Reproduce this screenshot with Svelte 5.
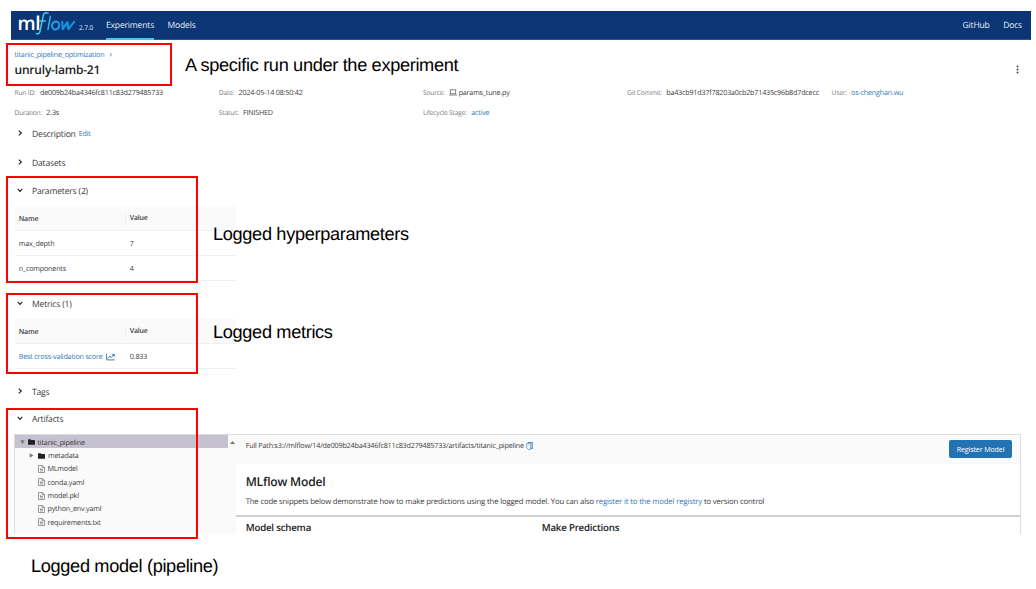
<script>
  const meta = [
    [
      { label: 'Run ID:', value: 'de009b24ba4346fc811c83d279485733' },
      { label: 'Date:', value: '2024-05-14 08:50:42' },
      { label: 'Source:', value: 'params_tune.py', icon: true },
      { label: 'Git Commit:', value: 'ba43cb91d37f78203a0cb2b71435c96b8d7dcecc' },
      { label: 'User:', value: 'os-chenghan.wu', link: true }
    ],
    [
      { label: 'Duration:', value: '2.3s' },
      { label: 'Status:', value: 'FINISHED' },
      { label: 'Lifecycle Stage:', value: 'active', link: true }
    ]
  ];
  const params = [['max_depth', '7'], ['n_components', '4']];
  const metrics = [['Best cross-validation score', '0.833']];
  const files = ['MLmodel', 'conda.yaml', 'model.pkl', 'python_env.yaml', 'requirements.txt'];
</script>

{#snippet section(title, open, cls, edit)}
  <div class="section {cls}">
    <svg class="chev" class:open width="6" height="6" viewBox="0 0 6 6"><path d="M1.8 .7 4.3 3 1.8 5.3" fill="none" stroke="#222" stroke-width="1.15" /></svg>
    <span>{title}</span>
    {#if edit}<a class="edit">Edit</a>{/if}
  </div>
{/snippet}

{#snippet table(rows, linked)}
  <div class="table">
    <div class="tr th"><span>Name</span><span class="val">Value</span></div>
    {#each rows as [name, value]}
      <div class="tr">
        {#if linked}
          <span class="link">{name}
            <svg width="9" height="8" viewBox="0 0 9 8" fill="none" stroke="#2a73b8"><path d="M.6.6v6.3h8.2" stroke-width=".9" /><path d="M1.8 5.4 3.8 3.3 5.2 4.4 8 1.8M6.3 1.5h2v2" stroke-width="1" /></svg>
          </span>
        {:else}
          <span>{name}</span>
        {/if}
        <span class="val">{value}</span>
      </div>
    {/each}
  </div>
{/snippet}

{#snippet folder()}
  <svg class="folder" width="7" height="6" viewBox="0 0 7 6"><path d="M0 .8Q0 .2.6.2H2.6L3.4 1.1H6.4Q7 1.1 7 1.7V5.2Q7 5.8 6.4 5.8H.6Q0 5.8 0 5.2Z" fill="#222" /></svg>
{/snippet}

<div class="page">
  <header>
    <div class="logo">
      <span class="ml">ml</span>
      <svg class="flow" width="41" height="25" viewBox="0 0 41 25" fill="none" stroke-linecap="round" stroke-linejoin="round">
        <path d="M13 2.2C10.6.9 8.8 2.1 8.2 4.7L5 20.2C4.4 22.7 3 23.3 1.4 22.5M4.5 10H10.3" stroke="#43c9ed" stroke-width="1.5" />
        <path d="M15.4 5.2 13 18.4" stroke="#32b5e8" stroke-width="1.5" />
        <ellipse cx="20.6" cy="14.5" rx="3.6" ry="4" transform="rotate(18 20.6 14.5)" stroke="#24a4e4" stroke-width="1.9" />
        <path d="M27.2 10.8 27.7 18.2 32.4 11.2 33.4 18.2 39.2 10.8" stroke="#1396e2" stroke-width="2.1" />
      </svg>
      <span class="ver">2.7.0</span>
    </div>
    <nav><a class="active">Experiments</a><a>Models</a></nav>
    <nav class="right"><a>GitHub</a><a>Docs</a></nav>
  </header>

  <main>
    <div class="crumb"><a>titanic_pipeline_optimization</a><svg width="4" height="5" viewBox="0 0 4 5"><path d="M1 1.2 2.6 2.7 1 4.2" fill="none" stroke="#666" stroke-width=".8" /></svg></div>
    <div class="titlerow">
      <h1>unruly-lamb-21</h1>
      <svg width="3" height="9" viewBox="0 0 3 9" fill="#444"><circle cx="1.5" cy="1.5" r=".95" /><circle cx="1.5" cy="4.5" r=".95" /><circle cx="1.5" cy="7.5" r=".95" /></svg>
    </div>
    {#each meta as row}
      <div class="meta">
        {#each row as m}
          <div class="item">
            <span class="label">{m.label}</span>
            {#if m.icon}<svg width="8" height="7" viewBox="0 0 8 7" fill="none" stroke="#666" stroke-width=".8"><rect x="1.3" y=".8" width="5.4" height="4" /><path d="M0 6H8" /></svg>{/if}
            <span class:link={m.link}>{m.value}</span>
          </div>
        {/each}
      </div>
    {/each}

    {@render section('Description', false, 'desc', true)}
    {@render section('Datasets', false, 'data')}
    {@render section('Parameters (2)', true, 'par')}
    {@render table(params, false)}
    {@render section('Metrics (1)', true, 'met')}
    {@render table(metrics, true)}
    {@render section('Tags', false, 'tags')}
    {@render section('Artifacts', true, 'art')}

    <div class="artifacts">
      <div class="tree">
        <div class="node root"><svg class="tri" width="5" height="5" viewBox="0 0 5 5"><path d="M.3.2H4.7L2.5 4.2Z" fill="#777" /></svg>{@render folder()}<span>titanic_pipeline</span></div>
        <div class="node child"><svg class="tri" width="5" height="5" viewBox="0 0 5 5"><path d="M.7.3V4.7L4.5 2.5Z" fill="#777" /></svg>{@render folder()}<span>metadata</span></div>
        {#each files as f}
          <div class="node file">
            <svg width="7" height="8" viewBox="0 0 7 8" fill="none" stroke="#777" stroke-width=".75"><path d="M.5.5H4.4L6.5 2.5V7.5H.5ZM4.2.5V2.7H6.5M2 3.2 3.2 4.5M2 4.4H5M2 5.9H5" /></svg>
            <span>{f}</span>
          </div>
        {/each}
      </div>
      <div class="scroll"><svg width="5" height="3" viewBox="0 0 5 3"><path d="M0 3 2.5 0 5 3Z" fill="#777" /></svg></div>
      <div class="detail">
        <div class="path">
          <span>Full Path:s3://mlflow/14/de009b24ba4346fc811c83d279485733/artifacts/titanic_pipeline</span>
          <svg width="7" height="8" viewBox="0 0 7 8" fill="none" stroke="#4a90c8" stroke-width="1.1"><path d="M1.6.6H6.2V6.4H5" /><path d="M.6 1.8H4.6V7.4H2.2L.6 5.8Z" stroke-width=".8" /></svg>
          <button>Register Model</button>
        </div>
        <div class="model">
          <h2>MLflow Model</h2>
          <p>The code snippets below demonstrate how to make predictions using the logged model. You can also <a>register it to the model registry</a> to version control</p>
        </div>
        <div class="cols"><h3>Model schema</h3><h3>Make Predictions</h3></div>
      </div>
    </div>
  </main>

  <div class="box b1"></div>
  <div class="box b2"></div>
  <div class="box b3"></div>
  <div class="box b4"></div>
  <div class="note n1">A specific run under the experiment</div>
  <div class="note n2">Logged hyperparameters</div>
  <div class="note n3">Logged metrics</div>
  <div class="note n4">Logged model (pipeline)</div>
</div>

<style>
  :global(body) { background: #fff; }
  .page { position: relative; width: 1036px; height: 589px; overflow: hidden; box-sizing: border-box; padding: 11px 5px 0 11px; font-family: "Open Sans", sans-serif; font-size: 7.2px; letter-spacing: -.2px; color: #3a3a3a; text-rendering: geometricPrecision; }
  .page * { box-sizing: border-box; }
  svg { display: block; flex: none; overflow: visible; }
  span, a, h1, h2, h3 { white-space: nowrap; }
  header { height: 29px; background: #0b3574; border-bottom: 1px solid #2d5590; display: flex; padding: 0 9px 0 6.5px; color: #e4edf6; font-size: 8.6px; letter-spacing: -.2px; }
  .logo { display: flex; width: 88.5px; height: 28px; }
  .ml { font-size: 19px; line-height: 24.5px; width: 18.5px; font-weight: 600; color: #fff; letter-spacing: -.5px; }
  .flow { margin: 0 0 0 -1px; }
  .ver { font-size: 6.5px; line-height: 33px; margin-left: 3px; letter-spacing: -.1px; }
  nav { display: flex; gap: 13.5px; line-height: 28.5px; }
  nav a { height: 29px; }
  .active { border-bottom: 2px solid #43c9ed; }
  .right { margin-left: auto; }
  main { padding-left: 3.5px; }
  .crumb { display: flex; align-items: center; gap: 4.5px; height: 14px; margin-top: 7px; color: #2f79bd; }
  .crumb a { padding-top: 1.5px; }
  .crumb svg { margin-top: 1px; }
  .titlerow { display: flex; align-items: center; justify-content: space-between; height: 16px; padding-right: 12px; }
  h1, h2, h3, p { margin: 0; }
  h1 { font-size: 12px; letter-spacing: -.2px; font-weight: 600; line-height: 16px; color: #222; padding-top: 1px; }
  .meta { display: grid; grid-template-columns: 204.3px 204.2px 204px 204.5px 1fr; height: 20px; align-items: center; margin-top: 5px; }
  .meta + .meta { margin-top: 0; }
  .item { display: flex; align-items: baseline; gap: 4.3px; line-height: 10px; padding-top: 1.2px; }
  .item svg { margin-right: -2.8px; align-self: center; }
  .label { font-size: 6.7px; color: #7c7c7c; }
  .link, p a { color: #2f79bd; }
  .section { display: flex; align-items: center; height: 14px; font-size: 8.6px; letter-spacing: -.2px; line-height: 14px; color: #3a3a3a; }
  .chev { margin: 0 9px 0 2.5px; position: relative; top: -.7px; }
  .open { transform: rotate(90deg); }
  .edit { font-size: 7.2px; color: #2f79bd; margin-left: 3px; }
  .desc { margin-top: 5px; }
  .data { margin-top: 15px; }
  .par { margin-top: 14px; }
  .met { margin-top: 16px; }
  .tags { margin-top: 16px; }
  .art { margin-top: 13px; }
  .table { width: 221.5px; margin-top: 8px; }
  .tr { display: grid; grid-template-columns: 111px 1fr; height: 25px; align-items: center; padding: 1.5px 0 0 4.3px; border-bottom: 1px solid #f0f0f0; }
  .tr .link { display: flex; align-items: center; gap: 3px; }
  .th { background: #fafafa; font-weight: 600; font-size: 7px; padding-top: 2.5px; }
  .th .val { border-left: 1px solid #eee; margin-left: -5px; padding-left: 4px; line-height: 12px; }
  .artifacts { display: flex; height: 100px; margin: 8px 0 0 -.5px; width: 1007px; border: 1px solid #ddd; border-bottom: 0; overflow: hidden; }
  .tree { width: 213px; background: #fafafa; }
  .node { display: flex; align-items: center; height: 13.35px; padding-top: 1px; }
  .node span { padding-top: 1.2px; }
  .root { background: #c5c1d0; padding-left: 4.5px; }
  .child { padding-left: 14px; }
  .file { padding-left: 23px; gap: 2.5px; }
  .tri { margin-right: 3.5px; }
  .folder { margin-right: 2.5px; }
  .child .folder { margin-right: 3px; margin-left: .5px; }
  .scroll { width: 8px; background: #fafafa; padding: 6px 0 0 1.5px; }
  .detail { flex: 1; }
  .path { display: flex; height: 29px; background: #fafafa; padding: 0 8px 0 9.7px; letter-spacing: -.187px; }
  .path span { line-height: 23px; }
  .path svg { margin: 6.5px 0 0 2.5px; }
  button { margin: 5px 0 0 auto; width: 63px; height: 18px; padding: 0; border: 0; border-radius: 2px; background: #2272b4; color: #fff; font: 7.2px "Open Sans", sans-serif; letter-spacing: -.17px; }
  .model { height: 53px; padding: 9px 0 0 9.7px; border-bottom: 2px solid #d0d0d0; }
  h2 { font-size: 12.1px; letter-spacing: -.21px; line-height: 18px; font-weight: 600; color: #222; }
  p { font-size: 7.7px; letter-spacing: -.142px; line-height: 12px; margin-top: 5px; white-space: nowrap; }
  .cols { display: grid; grid-template-columns: 296px 1fr; padding-left: 9.7px; }
  h3 { font-size: 9.7px; letter-spacing: -.2px; line-height: 22px; font-weight: 600; color: #222; }
  .box { position: absolute; border: 2px solid #f00; }
  .b1 { left: 6px; top: 43px; width: 166px; height: 43px; }
  .b2 { left: 6px; top: 176px; width: 192px; height: 107px; }
  .b3 { left: 6px; top: 293px; width: 192px; height: 81px; }
  .b4 { left: 6px; top: 408px; width: 192px; height: 131px; }
  .note { position: absolute; font: 18.2px/22px "Liberation Sans", sans-serif; letter-spacing: -.34px; color: #000; white-space: nowrap; }
  .n1 { left: 185px; top: 54px; }
  .n2 { left: 213px; top: 223px; }
  .n3 { left: 213px; top: 321px; }
  .n4 { left: 31px; top: 555px; }
</style>
